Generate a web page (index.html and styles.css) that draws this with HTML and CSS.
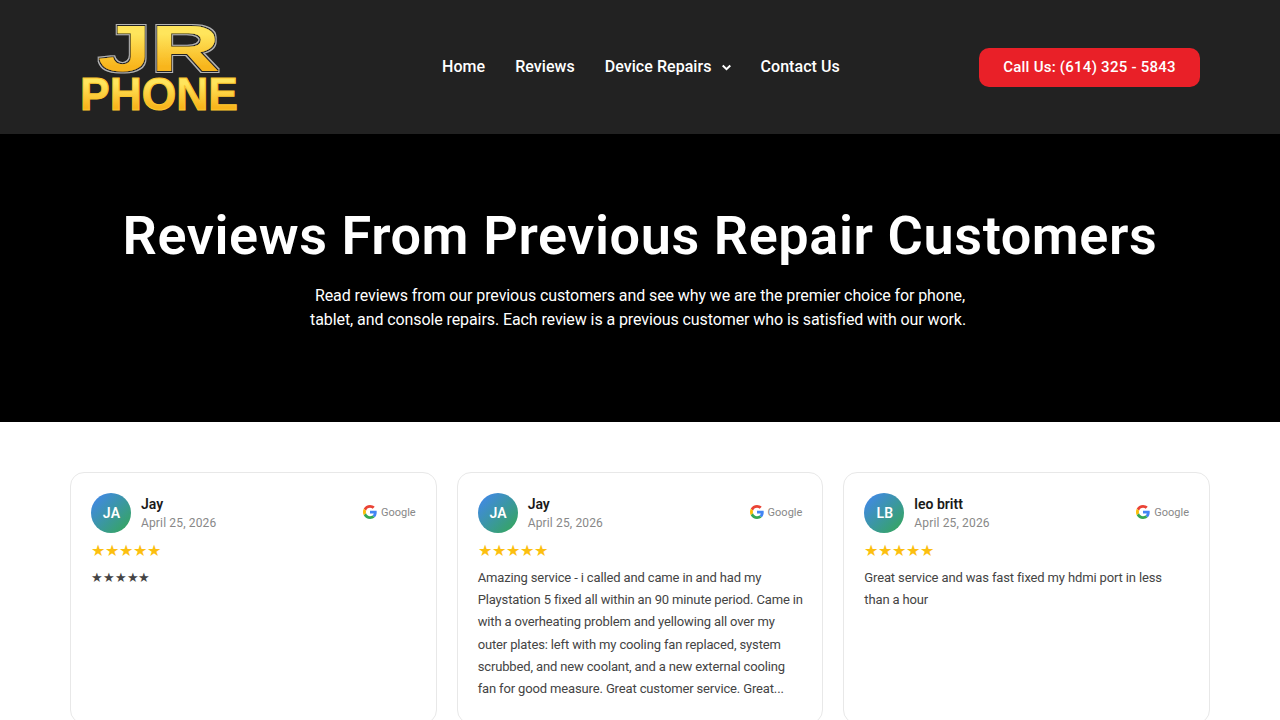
FILE: index.html
```html
<!DOCTYPE html>
<html lang="en">
<head>
  <meta charset="UTF-8">
  <meta name="viewport" content="width=device-width, initial-scale=1.0">
  <title>Reviews - JR Phone</title>
  <link rel="stylesheet" href="styles.css">
</head>
<body>
  <svg class="defs" width="0" height="0" aria-hidden="true">
    <defs>
      <linearGradient id="gold" x1="0" y1="0" x2="0" y2="1">
        <stop offset="0.3" stop-color="#ffe55c"/>
        <stop offset="0.75" stop-color="#f8b51c"/>
      </linearGradient>
      <filter id="chrome" x="-10%" y="-10%" width="120%" height="120%">
        <feMorphology in="SourceAlpha" operator="dilate" radius="2.200" result="outer"/>
        <feFlood flood-color="#b4b4b4"/>
        <feComposite in2="outer" operator="in" result="grey"/>
        <feMorphology in="SourceAlpha" operator="dilate" radius="1" result="inner"/>
        <feFlood flood-color="#222"/>
        <feComposite in2="inner" operator="in" result="dark"/>
        <feMerge>
          <feMergeNode in="grey"/>
          <feMergeNode in="dark"/>
          <feMergeNode in="SourceGraphic"/>
        </feMerge>
      </filter>
      <symbol id="g-logo" viewBox="0 0 48 48">
        <path fill="#EA4335" d="M24 9.500c3.500 0 6.700 1.200 9.200 3.600l6.900-6.900C35.900 2.400 30.500 0 24 0 14.600 0 6.500 5.400 2.600 13.200l8 6.200C12.400 13.700 17.700 9.500 24 9.500z"/>
        <path fill="#4285F4" d="M47 24.500c0-1.600-.1-3.100-.4-4.500H24v9h12.900c-.6 3-2.200 5.500-4.700 7.200l7.700 6C44.400 38.100 47 31.900 47 24.500z"/>
        <path fill="#FBBC05" d="M10.600 28.600c-.5-1.400-.8-3-.8-4.600s.3-3.200.8-4.600l-8-6.200C.9 16.500 0 20.100 0 24s.9 7.500 2.600 10.800l8-6.200z"/>
        <path fill="#34A853" d="M24 48c6.500 0 11.900-2.100 15.900-5.800l-7.700-6c-2.200 1.500-4.900 2.300-8.200 2.300-6.300 0-11.600-4.200-13.400-9.900l-8 6.200C6.500 42.600 14.600 48 24 48z"/>
      </symbol>
    </defs>
  </svg>

  <header class="site-header">
    <a class="logo" href="#">
      <svg width="157" height="134" viewBox="0 0 157 134" role="img" aria-label="JR Phone">
        <text class="logo-jr" x="17" y="71" textLength="122" lengthAdjust="spacingAndGlyphs">JR</text>
        <text class="logo-phone" x="-1" y="110" textLength="158" lengthAdjust="spacingAndGlyphs">PHONE</text>
      </svg>
    </a>
    <nav class="main-nav">
      <a href="#">Home</a>
      <a href="#">Reviews</a>
      <a href="#" class="has-sub">Device Repairs
        <svg width="9" height="7" viewBox="0 0 10 7"><path d="M.8 1.200 5 5.400l4.200-4.200" fill="none" stroke="#fff" stroke-width="2.200"/></svg>
      </a>
      <a href="#">Contact Us</a>
    </nav>
    <a class="call-btn" href="#">Call Us: (614) 325 - 5843</a>
  </header>

  <section class="hero">
    <h1>Reviews From Previous Repair Customers</h1>
    <p>Read reviews from our previous customers and see why we are the premier choice for phone,<br>tablet, and console repairs. Each review is a previous customer who is satisfied with our work.&nbsp;</p>
  </section>

  <section class="reviews">
    <article class="card">
      <div class="card-top">
        <div class="avatar">JA</div>
        <div class="who">
          <div class="name">Jay</div>
          <div class="date">April 25, 2026</div>
        </div>
        <div class="source"><svg width="14" height="14"><use href="#g-logo"/></svg>Google</div>
      </div>
      <div class="stars">★★★★★</div>
      <p class="text">★★★★★</p>
    </article>
    <article class="card">
      <div class="card-top">
        <div class="avatar">JA</div>
        <div class="who">
          <div class="name">Jay</div>
          <div class="date">April 25, 2026</div>
        </div>
        <div class="source"><svg width="14" height="14"><use href="#g-logo"/></svg>Google</div>
      </div>
      <div class="stars">★★★★★</div>
      <p class="text">Amazing service - i called and came in and had my<br>Playstation 5 fixed all within an 90 minute period. Came in<br>with a overheating problem and yellowing all over my<br>outer plates: left with my cooling fan replaced, system<br>scrubbed, and new coolant, and a new external cooling<br>fan for good measure. Great customer service. Great...</p>
    </article>
    <article class="card">
      <div class="card-top">
        <div class="avatar">LB</div>
        <div class="who">
          <div class="name">leo britt</div>
          <div class="date">April 25, 2026</div>
        </div>
        <div class="source"><svg width="14" height="14"><use href="#g-logo"/></svg>Google</div>
      </div>
      <div class="stars">★★★★★</div>
      <p class="text">Great service and was fast fixed my hdmi port in less<br>than a hour</p>
    </article>
  </section>
</body>
</html>
```

FILE: styles.css
```css
* {
  box-sizing: border-box;
}
html, body {
  height: 720px;
  overflow: hidden;
}
body {
  margin: 0;
  font-family: Roboto, 'Liberation Sans', sans-serif;
  background: #fff;
  color: #222;
}
a {
  color: inherit;
  text-decoration: none;
}
.defs {
  display: block;
  height: 0;
}

/* header */
.site-header {
  height: 134px;
  background: #222;
  display: flex;
  align-items: center;
  padding: 0 80px 0 81px;
}
.logo {
  display: block;
  width: 157px;
  height: 134px;
}
.logo svg {
  display: block;
  overflow: visible;
}
.logo-jr {
  font: 700 65px 'Liberation Sans', sans-serif;
  fill: url(#gold);
  filter: url(#chrome);
}
.logo-phone {
  font: 700 46px 'Liberation Sans', sans-serif;
  fill: url(#gold);
  stroke: #fcc62e;
  stroke-width: 1px;
}
.main-nav {
  display: flex;
  gap: 30px;
  margin: -2px 0 0 204px;
  color: #fff;
  font-size: 16px;
  font-weight: 500;
  letter-spacing: 0.05px;
}
.has-sub svg {
  margin-left: 6px;
  vertical-align: 1px;
}
.call-btn {
  margin-left: auto;
  width: 221px;
  height: 39px;
  line-height: 38px;
  text-align: center;
  background: #e92028;
  border-radius: 10px;
  color: #fff;
  font-size: 15px;
  font-weight: 500;
  letter-spacing: 0.25px;
}

/* hero */
.hero {
  height: 288px;
  background: #000;
  color: #fff;
  text-align: center;
  padding-top: 70px;
}
.hero h1 {
  margin: 0;
  font-size: 54px;
  font-weight: 600;
  line-height: 64px;
  letter-spacing: 0.6px;
}
.hero p {
  margin: 16px 0 0;
  font-size: 16px;
  line-height: 24px;
  letter-spacing: -0.09px;
}

/* review cards */
.reviews {
  display: grid;
  grid-template-columns: repeat(3, minmax(0, 1fr));
  gap: 20px;
  padding: 50px 70px 0;
}
.card {
  height: 252px;
  background: #fff;
  border: 1px solid #e8e8e8;
  border-radius: 14px;
  padding: 20px;
}
.card-top {
  display: flex;
  align-items: center;
  gap: 10px;
}
.avatar {
  width: 40px;
  height: 40px;
  border-radius: 50%;
  background: linear-gradient(135deg, #4285f4, #34a853);
  color: #fff;
  font-size: 14px;
  font-weight: 600;
  letter-spacing: 0.2px;
  text-align: center;
  text-indent: 1px;
  line-height: 40px;
}
.name {
  font-size: 14px;
  font-weight: 600;
  line-height: 20px;
  margin-top: -2px;
  color: #1a1a1a;
}
.date {
  font-size: 12px;
  line-height: 16px;
  margin-top: 1px;
  letter-spacing: 0.15px;
  color: #888;
}
.source {
  margin: -2px 0 0 auto;
  display: flex;
  align-items: center;
  gap: 4px;
  font-size: 11px;
  color: #888;
}
.stars {
  margin-top: 8px;
  font-size: 16px;
  line-height: 20px;
  color: #fcbf0f;
}
.text {
  margin: 6px 0 0;
  font-size: 13px;
  line-height: 22.200px;
  letter-spacing: -0.14px;
  white-space: nowrap;
  color: #444;
}
```
